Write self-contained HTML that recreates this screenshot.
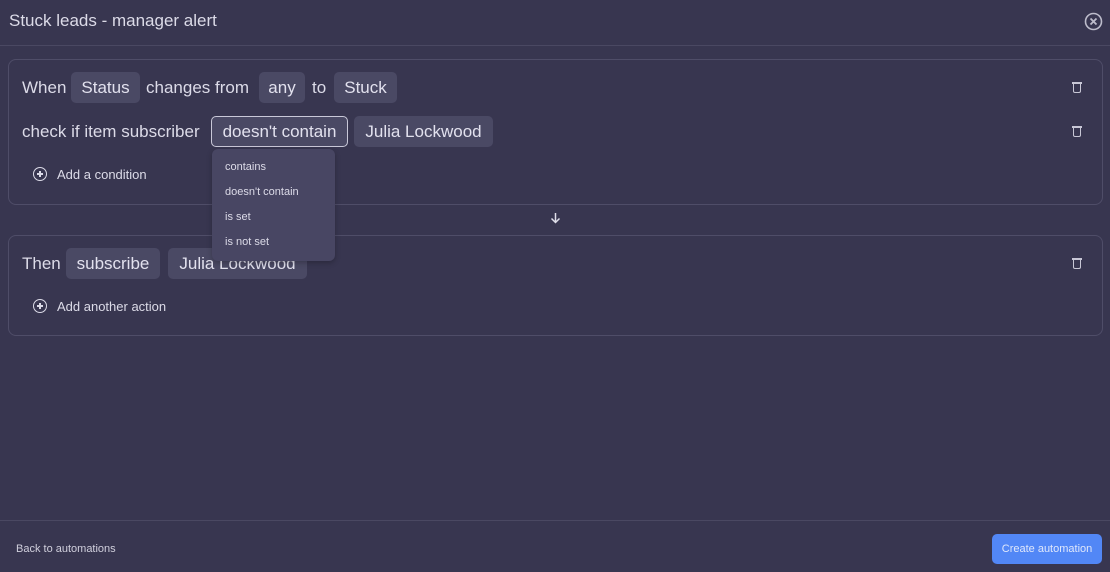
<!DOCTYPE html>
<html><head><style>
body{margin:0;width:1110px;height:572px;background:#383650;font-family:"Liberation Sans",sans-serif;color:#dcdbe8;position:relative;overflow:hidden}
.a{position:absolute;white-space:nowrap}
.t{font-size:17px;line-height:31px}
.chip{position:absolute;background:#4a4964;border-radius:5px;font-size:17px;line-height:31px;height:31px;text-align:center;color:#e2e1ee}
.box{position:absolute;border:1px solid #4f4d68;border-radius:8px}
.trash{position:absolute;width:6px;height:8px;border:1.5px solid #c8c7d6;border-top:none;border-radius:0 0 2px 2px}
.trash:before{content:"";position:absolute;left:-2px;top:-2px;width:10px;height:1.5px;background:#c8c7d6}
.plus{position:absolute;width:12px;height:12px;border:1.5px solid #dcdbe8;border-radius:50%}
.plus:before{content:"";position:absolute;left:3px;top:5.25px;width:6px;height:1.5px;background:#dcdbe8}
.plus:after{content:"";position:absolute;left:5.25px;top:3px;width:1.5px;height:6px;background:#dcdbe8}
</style></head><body>
<div class="a" style="left:9px;top:11px;font-size:17px">Stuck leads - manager alert</div>
<svg class="a" style="left:1084px;top:12px" width="19" height="19" viewBox="0 0 19 19"><circle cx="9.5" cy="9.5" r="8" fill="none" stroke="#bdbccb" stroke-width="1.6"/><path d="M6.5 6.5l6 6M12.5 6.5l-6 6" stroke="#bdbccb" stroke-width="1.8"/></svg>
<div class="a" style="left:0;top:45px;width:1110px;height:1px;background:#4a4862"></div>

<div class="box" style="left:8px;top:59px;width:1093px;height:144px"></div>
<div class="a t" style="left:22px;top:72px">When</div>
<div class="chip" style="left:71px;top:72px;width:69px">Status</div>
<div class="a t" style="left:146px;top:72px">changes from</div>
<div class="chip" style="left:259px;top:72px;width:46px">any</div>
<div class="a t" style="left:312px;top:72px">to</div>
<div class="chip" style="left:334px;top:72px;width:63px">Stuck</div>
<div class="a t" style="left:22px;top:116px">check if item subscriber</div>
<div class="chip" style="left:211px;top:116px;width:135px;height:29px;line-height:29px;border:1px solid #c9c8d8">doesn't contain</div>
<div class="chip" style="left:354px;top:116px;width:139px">Julia Lockwood</div>
<div class="trash" style="left:1073px;top:84px"></div>
<div class="trash" style="left:1073px;top:128px"></div>
<div class="plus" style="left:33px;top:167px"></div>
<div class="a" style="left:57px;top:167px;font-size:13px">Add a condition</div>

<svg class="a" style="left:550px;top:212px" width="11" height="12" viewBox="0 0 11 12"><path d="M5.5 1v9M1.5 6.5l4 4 4-4" fill="none" stroke="#e0dfea" stroke-width="1.5"/></svg>

<div class="box" style="left:8px;top:235px;width:1093px;height:99px"></div>
<div class="a t" style="left:22px;top:248px">Then</div>
<div class="chip" style="left:66px;top:248px;width:94px">subscribe</div>
<div class="chip" style="left:168px;top:248px;width:139px">Julia Lockwood</div>
<div class="trash" style="left:1073px;top:260px"></div>
<div class="plus" style="left:33px;top:299px"></div>
<div class="a" style="left:57px;top:299px;font-size:13px">Add another action</div>

<div class="a" style="left:212px;top:149px;width:123px;height:112px;background:#484663;border-radius:6px;font-size:11px;color:#dcdbe8;box-shadow:0 2px 6px rgba(0,0,0,.25)">
<div class="a" style="left:13px;top:12px">contains</div>
<div class="a" style="left:13px;top:37px">doesn't contain</div>
<div class="a" style="left:13px;top:62px">is set</div>
<div class="a" style="left:13px;top:87px">is not set</div>
</div>

<div class="a" style="left:0;top:520px;width:1110px;height:1px;background:#4a4862"></div>
<div class="a" style="left:16px;top:543px;font-size:11px;color:#d0cfdc">Back to automations</div>
<div class="a" style="left:992px;top:534px;width:110px;height:30px;background:#5287f6;border-radius:5px;font-size:11px;line-height:30px;text-align:center;color:#dfe7fb">Create automation</div>
</body></html>
